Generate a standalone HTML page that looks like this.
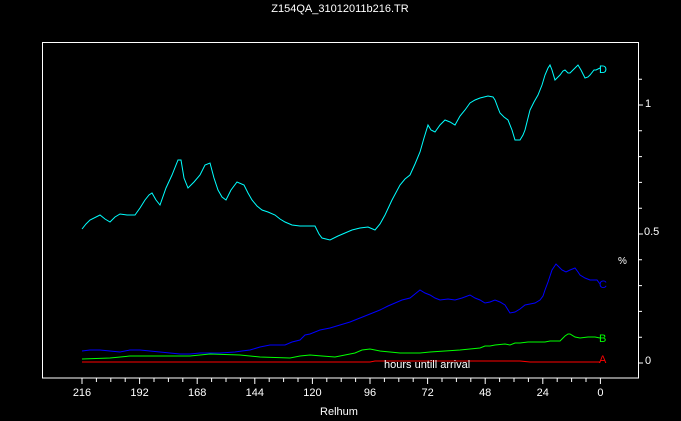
<!DOCTYPE html>
<html><head><meta charset="utf-8"><style>
html,body{margin:0;padding:0;background:#000;}
svg{display:block;font-family:"Liberation Sans",sans-serif;}
</style></head><body>
<svg width="681" height="421" viewBox="0 0 681 421" xmlns="http://www.w3.org/2000/svg">
<rect width="681" height="421" fill="#000"/>
<text x="340" y="12" fill="#fff" font-size="11" text-anchor="middle">Z154QA_31012011b216.TR</text>
<rect x="42.5" y="42.5" width="596" height="335.5" fill="none" stroke="#fff" stroke-width="1"/>
<g stroke="#fff" stroke-width="1">
<path d="M82,378v6M96.4,378v4M110.8,378v4M125.2,378v4M139.6,378v6M154,378v4M168.4,378v4M182.8,378v4M197.2,378v6M211.6,378v4M226,378v4M240.4,378v4M254.8,378v6M269.2,378v4M283.6,378v4M298,378v4M312.4,378v6M326.8,378v4M341.2,378v4M355.6,378v4M370,378v6M384.4,378v4M398.8,378v4M413.2,378v4M427.6,378v6M442,378v4M456.4,378v4M470.8,378v4M485.2,378v6M499.6,378v4M514,378v4M528.4,378v4M542.8,378v6M557.2,378v4M571.6,378v4M586,378v4M600.4,378v6"/>
<path d="M638,363h5M638,337.2h4M638,311.4h4M638,285.6h4M638,259.8h4M638,234h5M638,208.2h4M638,182.4h4M638,156.6h4M638,130.8h4M638,105h5M638,79.2h4"/>
</g>
<g fill="#fff" font-size="11" text-anchor="middle">
<text x="82" y="396">216</text><text x="139.6" y="396">192</text><text x="197.2" y="396">168</text><text x="254.8" y="396">144</text><text x="312.4" y="396">120</text><text x="370" y="396">96</text><text x="427.6" y="396">72</text><text x="485.2" y="396">48</text><text x="542.8" y="396">24</text><text x="600.4" y="396">0</text>
<text x="339" y="415">Relhum</text>
</g>
<g fill="#fff" font-size="11">
<text x="645" y="364">0</text><text x="644" y="235">0.5</text><text x="645" y="107">1</text>
<text x="618" y="264" font-size="10">%</text>
</g>
<g fill="none" stroke-width="1">
<polyline stroke="#00ffff" points="82,229 86,224 90,220 100,215 105,219 110,222 115,217 120,214 127,215 135,215 140,208 145,200 149,195 152,193 156,200 160,205 166,188 172,175 178,160 181,160 184,178 188,188 194,182 200,175 205,165 210,163 214,178 218,190 222,197 226,200 231,190 237,182 244,185 248,193 252,200 257,206 262,210 268,212 275,215 280,219 285,222 292,225 300,226 308,226 315,226 319,234 322,238 330,240 338,236 345,233 352,230 360,228 368,227 375,230 380,224 385,215 392,200 400,185 405,179 410,175 415,164 420,152 424,138 428,125 431,130 435,132 440,125 445,120 450,122 455,125 460,116 465,110 470,103 475,100 480,98 488,96 493,97 495,100 498,108 500,113 504,117 508,120 512,130 515,140 520,140 523,135 525,130 528,118 530,110 534,102 538,95 542,85 545,75 548,68 550,65 552,70 555,80 557,78 560,75 563,71 565,70 568,73 570,73 574,69 578,65 581,70 585,78 588,77 590,75 594,70 596,70 600,68"/>
<polyline stroke="#0000ff" points="82,351 90,350 100,350 110,351 120,352 130,350 140,350 150,351 160,352 170,353 180,354 190,354 200,353 210,353 220,353 235,352 242,351 250,350 260,347 270,345 278,345 285,345 292,342 300,340 305,335 310,334 320,330 330,328 340,325 350,322 360,318 370,314 380,310 388,306 395,303 402,300 410,298 415,294 420,290 425,293 430,295 435,298 440,300 448,299 455,300 462,298 470,295 475,298 480,300 485,303 490,302 495,300 500,302 505,305 510,313 515,312 520,309 525,305 530,304 535,303 540,300 543,296 545,290 548,282 552,270 556,264 559,267 562,270 566,272 570,270 575,268 578,272 580,275 585,278 590,280 597,280 600,284"/>
<polyline stroke="#00ff00" points="82,359 110,358 130,356 160,356 190,356 210,354 240,355 260,357 290,358 300,356 310,355 322,356 335,357 345,355 355,353 362,350 370,349 380,351 390,352 400,353 410,353 420,353 430,352 445,351 460,350 470,349 480,348 485,346 490,346 495,345 505,344 510,345 515,343 520,343 528,342 535,342 545,342 550,341 560,341 563,338 565,336 568,334 570,334 575,337 580,338 588,337 595,337 600,338"/>
<polyline stroke="#ff0000" points="82,362 370,362 375,361 520,361 530,362 540,362 600,362"/>
</g>
<g font-size="11">
<text x="599" y="73" fill="#00ffff">D</text>
<text x="599" y="288" fill="#0000ff">C</text>
<text x="599" y="342" fill="#00ff00">B</text>
<text x="599" y="363" fill="#ff0000">A</text>
<text x="384" y="368" fill="#fff">hours untill arrival</text>
</g>
</svg>
</body></html>
